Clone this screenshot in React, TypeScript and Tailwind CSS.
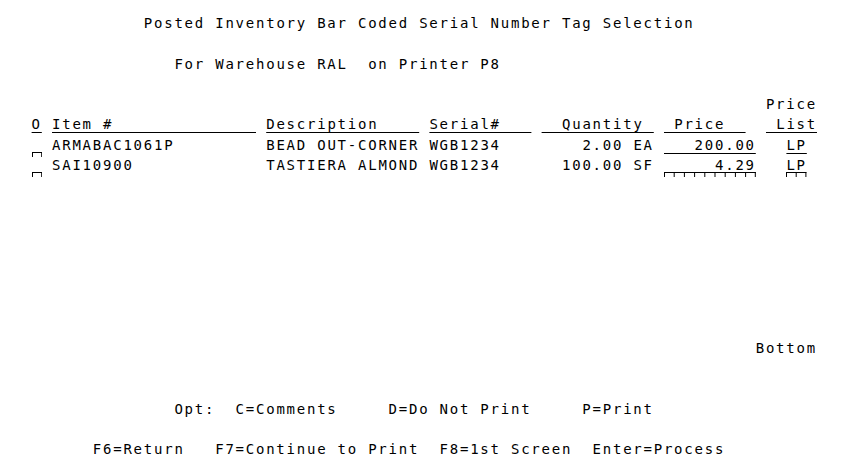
import React from "react";

// 5250 style green-screen, rendered black on white
const CW = 10.2;

type Seg = { col: number; text: string; u?: "line" | "sep" };

function Field({ seg }: { seg: Seg }) {
  const n = seg.text.length;
  const w = n * CW;
  const cls =
    seg.u === "line"
      ? "underline decoration-1 underline-offset-[3px]"
      : seg.u === "sep"
        ? "relative"
        : "";
  return (
    <span className={cls}>
      {seg.text}
      {seg.u === "sep" && (
        <svg
          className="absolute left-0 top-[15px]"
          width={w}
          height={6}
          viewBox={`0 0 ${w} 6`}
        >
          <path d={`M0 0.5H${w}`} stroke="#000" strokeWidth={1} />
          {Array.from({ length: n + 1 }).map((_, i) => {
            const x = Math.min(Math.max(i * CW, 0.5), w - 0.5);
            return <path key={i} d={`M${x} 0V5`} stroke="#000" strokeWidth={1} />;
          })}
        </svg>
      )}
    </span>
  );
}

function Row({ segs = [] }: { segs?: Seg[] }) {
  const out: React.ReactNode[] = [];
  let pos = 0;
  segs.forEach((s, i) => {
    if (s.col > pos) out.push(" ".repeat(s.col - pos));
    out.push(<Field key={i} seg={s} />);
    pos = s.col + s.text.length;
  });
  return <div className="h-[20.3px] whitespace-pre leading-[20.3px]">{out}</div>;
}

const rows: Seg[][] = [];
rows[1] = [{ col: 14, text: "Posted Inventory Bar Coded Serial Number Tag Selection" }];
rows[3] = [{ col: 17, text: "For Warehouse RAL  on Printer P8" }];
rows[5] = [{ col: 75, text: "Price" }];
rows[6] = [
  { col: 3, text: "O", u: "line" },
  { col: 5, text: "Item #              ", u: "line" },
  { col: 26, text: "Description    ", u: "line" },
  { col: 42, text: "Serial#   ", u: "line" },
  { col: 53, text: "  Quantity ", u: "line" },
  { col: 65, text: " Price  ", u: "line" },
  { col: 75, text: " List", u: "line" },
];
rows[7] = [
  { col: 3, text: " ", u: "sep" },
  { col: 5, text: "ARMABAC1061P" },
  { col: 26, text: "BEAD OUT-CORNER" },
  { col: 42, text: "WGB1234" },
  { col: 55, text: "  2.00 EA" },
  { col: 65, text: "   200.00", u: "line" },
  { col: 77, text: "LP", u: "line" },
];
rows[8] = [
  { col: 3, text: " ", u: "sep" },
  { col: 5, text: "SAI10900" },
  { col: 26, text: "TASTIERA ALMOND" },
  { col: 42, text: "WGB1234" },
  { col: 55, text: "100.00 SF" },
  { col: 65, text: "     4.29", u: "sep" },
  { col: 77, text: "LP", u: "sep" },
];
rows[17] = [{ col: 74, text: "Bottom" }];
rows[20] = [{ col: 17, text: "Opt:  C=Comments     D=Do Not Print     P=Print" }];
rows[22] = [
  { col: 9, text: "F6=Return   F7=Continue to Print  F8=1st Screen  Enter=Process" },
];

export default function App() {
  return (
    <div className="h-[476px] w-[850px] overflow-hidden bg-white pl-[1px] pt-[13px] font-['DejaVu_Sans_Mono',monospace] text-[14px] tracking-[1.77px] text-black">
      {Array.from({ length: 23 }).map((_, i) => (
        <Row key={i} segs={rows[i + 1]} />
      ))}
    </div>
  );
}
